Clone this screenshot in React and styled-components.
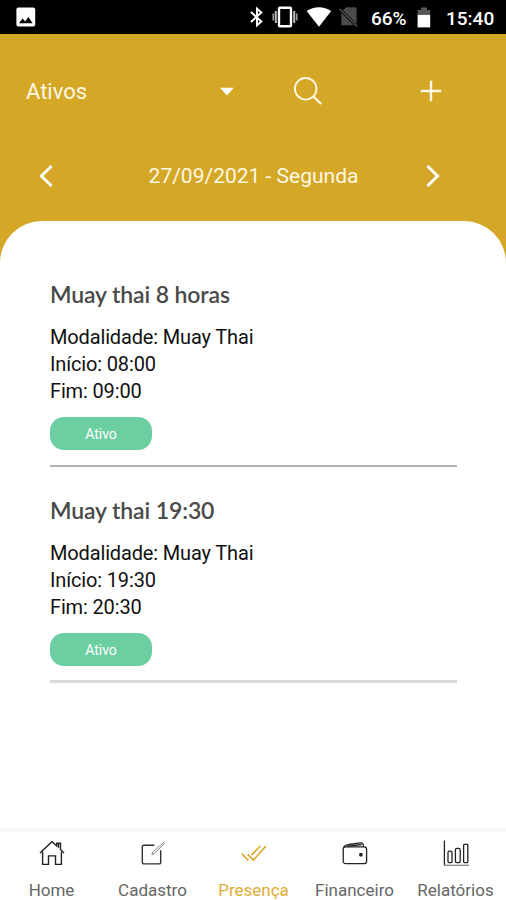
import React, { useState } from 'react';
import styled, { createGlobalStyle } from 'styled-components';

const classes = [
  { id: 1, name: 'Muay thai 8 horas', modality: 'Muay Thai', start: '08:00', end: '09:00' },
  { id: 2, name: 'Muay thai 19:30', modality: 'Muay Thai', start: '19:30', end: '20:30' },
];

const HomeIcon = () => (
  <svg width='26' height='26' viewBox='0 0 26 26' fill='none' stroke='#222' strokeWidth='1.4'>
    <path d='M1 12.9 13 1.8l4.7 4.2V3.3h3.8v6.2l3.5 3.4' />
    <path d='M3.6 11.4v13h5.9v-8.5h7v8.5h5.9v-13' />
    <path d='M19.5 3.3v4.5' />
  </svg>
);

const EditIcon = () => (
  <svg width='26' height='26' viewBox='0 0 26 26' fill='none' stroke='#333' strokeWidth='1.4'>
    <path d='M14.3 5.2H3.8a1.5 1.5 0 0 0-1.5 1.5v15.7a1.5 1.5 0 0 0 1.5 1.5h15.4a1.5 1.5 0 0 0 1.5-1.5V10.2' />
    <path d='m11.8 14.6 1-2.6L23.7 2.4l1 1L14 13.8z' stroke='#777' strokeWidth='.9' />
  </svg>
);

const ChecksIcon = () => (
  <svg width='26' height='26' viewBox='0 0 26 26' fill='none' stroke='#d9a62a' strokeWidth='1.6'>
    <path d='m.8 13.8 6.6 6.6M6.6 14.4l5.8 5.6L25 6' />
    <path d='m10.6 15.2 8.6-9.2' />
  </svg>
);

const WalletIcon = () => (
  <svg width='26' height='26' viewBox='0 0 26 26' fill='none' stroke='#222' strokeWidth='1.3'>
    <rect x='1.2' y='6.8' width='23.4' height='16.8' rx='2.4' />
    <path d='M1.5 7.6C2.2 5 4.8 4.8 7 4.5l11-1.6c2-.3 3 .3 3.2 1.5v2.4M5 6.4l14.6-1.9' />
    <rect x='17.2' y='13' width='3.4' height='3.4' rx='.8' fill='#222' stroke='none' />
  </svg>
);

const ChartIcon = () => (
  <svg width='26' height='28' viewBox='0 0 26 28' fill='none' stroke='#222' strokeWidth='1.3'>
    <path d='M1.4 1.5v25' />
    <path d='M1 26.3h25' stroke='#888' />
    <rect x='5' y='12.2' width='4' height='11.4' rx='1.2' />
    <rect x='12.4' y='9.4' width='4.8' height='14.2' rx='1.6' />
    <rect x='20.6' y='5.4' width='4.2' height='18.2' rx='.8' />
  </svg>
);

const tabs = [
  { label: 'Home', Icon: HomeIcon },
  { label: 'Cadastro', Icon: EditIcon },
  { label: 'Presença', Icon: ChecksIcon },
  { label: 'Financeiro', Icon: WalletIcon },
  { label: 'Relatórios', Icon: ChartIcon },
];

const StatusBar = () => (
  <StStatusBar>
    <svg width='20' height='20' viewBox='0 0 20 20'>
      <rect x='.4' y='.6' width='18.8' height='18.8' rx='2' fill='#fff' />
      <path d='m3 16.2 3.6-4.6 2.5 2.8 3.3-4.5 4.2 6.3z' fill='#000' />
    </svg>
    <StatusIcons>
      <Signals>
        <svg width='16' height='22' viewBox='0 0 16 22' fill='none' stroke='#fff' strokeWidth='2'>
          <path d='m2 6 10.3 9.6L8 19.4V2.6l4.3 3.8L2 16' />
        </svg>
        <svg width='26' height='22' viewBox='0 0 26 22' fill='none' stroke='#fff'>
          <rect x='7' y='1.7' width='12' height='18.6' rx='1' strokeWidth='2.4' />
          <path d='M3.8 5v12M22.2 5v12' strokeWidth='2' stroke='#bbb' />
          <path d='M1.3 7.5v7M24.7 7.5v7' strokeWidth='1.7' stroke='#999' />
        </svg>
        <svg width='26' height='22' viewBox='0 0 26 22'>
          <path d='M.6 5.1C7.7-.2 18-.2 25.2 5.1L13 20.8z' fill='#fff' />
        </svg>
        <svg width='20' height='22' viewBox='0 0 20 22'>
          <path d='M7 1.3h9.2c.8 0 1.4.5 1.4 1.3v16.6H2.3V6z' fill='#4b4b4b' />
          <path d='M1 3.2 18.5 21' stroke='#000' strokeWidth='3' />
          <path d='M.6 2.8 18.2 20.6' stroke='#555' strokeWidth='1.4' />
        </svg>
      </Signals>
      <Percent>66%</Percent>
      <svg width='14' height='22' viewBox='0 0 14 22'>
        <path d='M4 1.6h6v2.5h3.2v5H.6v-5H4z' fill='#555' />
        <path d='M.6 8.9h12.6v12.5H.6z' fill='#fff' />
      </svg>
      <Clock>15:40</Clock>
    </StatusIcons>
  </StStatusBar>
);

const ClassItem = ({ item, light }) => (
  <StClassItem $light={light}>
    <h2>{item.name}</h2>
    <p>Modalidade: {item.modality}</p>
    <p>Início: {item.start}</p>
    <p>Fim: {item.end}</p>
    <Badge>Ativo</Badge>
  </StClassItem>
);

const App = () => {
  const [activeTab, setActiveTab] = useState('Presença');

  return (
    <>
      <GlobalStyle />
      <Screen>
        <StatusBar />
        <Header>
          <FilterRow>
            <Filter type='button'>
              <span>Ativos</span>
              <svg width='14' height='9' viewBox='0 0 14 9'>
                <path d='M.2.8h13.6L7 8.4z' fill='#fff' />
              </svg>
            </Filter>
            <IconButton type='button' aria-label='Buscar' $width={30} $left={59}>
              <svg width='30' height='30' viewBox='0 0 30 30' fill='none' stroke='#fff8e4' strokeWidth='1.9'>
                <circle cx='12.7' cy='12.8' r='10.8' />
                <path d='m20.2 20.4 8 7.6' strokeWidth='2.2' />
              </svg>
            </IconButton>
            <IconButton type='button' aria-label='Adicionar' $width={24} $left={96}>
              <svg width='24' height='24' viewBox='0 0 24 24' stroke='#fff8e4' strokeWidth='2.4'>
                <path d='M12 1.8v20.4M1.8 12h20.4' />
              </svg>
            </IconButton>
          </FilterRow>
          <DateRow>
            <IconButton type='button' aria-label='Dia anterior' $width={16}>
              <svg width='16' height='24' viewBox='0 0 16 24' fill='none' stroke='#fff' strokeWidth='3'>
                <path d='M13.6 2 3.4 12l10.2 10' />
              </svg>
            </IconButton>
            <DateLabel>27/09/2021 - Segunda</DateLabel>
            <IconButton type='button' aria-label='Próximo dia' $width={16}>
              <svg width='16' height='24' viewBox='0 0 16 24' fill='none' stroke='#fff' strokeWidth='3'>
                <path d='m2.4 2 10.2 10L2.4 22' />
              </svg>
            </IconButton>
          </DateRow>
        </Header>
        <Sheet>
          {classes.map((item, index) => (
            <ClassItem key={item.id} item={item} light={index === classes.length - 1} />
          ))}
        </Sheet>
        <TabBar>
          {tabs.map(({ label, Icon }) => (
            <Tab
              key={label}
              type='button'
              $active={label === activeTab}
              onClick={() => setActiveTab(label)}
            >
              <TabIcon>
                <Icon />
              </TabIcon>
              <span>{label}</span>
            </Tab>
          ))}
        </TabBar>
      </Screen>
    </>
  );
};

export default App;

const GlobalStyle = createGlobalStyle`
  * {
    box-sizing: border-box;
  }
  body {
    margin: 0;
    font-family: Roboto, 'Liberation Sans', sans-serif;
  }
  button {
    padding: 0;
    border: none;
    background: none;
    font-family: inherit;
  }
  svg {
    display: block;
    flex-shrink: 0;
  }
`;

const Screen = styled.div`
  display: flex;
  flex-direction: column;
  width: 506px;
  height: 900px;
  overflow: hidden;
  background-color: #d4a726;
`;

const StStatusBar = styled.div`
  display: flex;
  justify-content: space-between;
  align-items: center;
  height: 34px;
  padding: 0 11px 0 16px;
  background-color: #000;
  color: #fff;
  font-size: 19px;
  font-weight: 500;
`;

const StatusIcons = styled.div`
  display: flex;
  align-items: center;
`;

const Signals = styled.div`
  display: flex;
  gap: 7.5px;
`;

const Percent = styled.span`
  width: 37px;
  margin: 2px 9px 0 12px;
`;

const Clock = styled.span`
  width: 49px;
  margin: 2px 0 0 15px;
`;

const Header = styled.header`
  height: 187px;
  padding: 32px 65px 0 26px;
  color: #fff8e4;
`;

const FilterRow = styled.div`
  display: flex;
  align-items: center;
  height: 50px;
`;

const Filter = styled.button`
  display: flex;
  justify-content: space-between;
  align-items: center;
  width: 208px;
  flex-shrink: 0;
  color: inherit;
  font-size: 22px;
`;

const DateRow = styled.div`
  display: flex;
  align-items: center;
  height: 50px;
  margin-top: 35px;
  padding-left: 12px;
`;

const DateLabel = styled.span`
  flex: 1;
  padding-left: 28px;
  font-size: 21px;
  text-align: center;
`;

const IconButton = styled.button`
  flex-shrink: 0;
  width: ${({ $width }) => $width}px;
  margin-left: ${({ $left }) => $left || 0}px;
`;

const Sheet = styled.main`
  flex: 1;
  padding: 56px 49px 0 50px;
  border-radius: 42px 42px 0 0;
  background-color: #fff;
`;

const StClassItem = styled.section`
  height: 190px;
  margin-bottom: 26px;
  border-bottom: ${({ $light }) => ($light ? '3px solid #dadada' : '2px solid #b4b4b4')};
  & h2 {
    margin: 0 0 12px;
    color: #4a4a4a;
    font-family: Lato, sans-serif;
    font-size: 23px;
    font-weight: 600;
    letter-spacing: -0.12px;
    line-height: 35px;
  }
  & p {
    margin: 0;
    color: #111;
    font-size: 20px;
    letter-spacing: -0.15px;
    line-height: 27px;
  }
`;

const Badge = styled.div`
  width: 102px;
  height: 33px;
  margin-top: 12px;
  border-radius: 14px;
  background-color: #6bcfa1;
  color: #fff;
  font-size: 14px;
  line-height: 35px;
  text-align: center;
`;

const TabBar = styled.nav`
  display: flex;
  height: 72px;
  padding-left: 1px;
  border-top: 4px solid #f6f6f6;
  background-color: #fff;
`;

const Tab = styled.button`
  display: flex;
  flex: 1;
  flex-direction: column;
  align-items: center;
  color: ${({ $active }) => ($active ? '#dfac35' : '#666')};
  font-size: 17px;
  line-height: 20px;
`;

const TabIcon = styled.div`
  display: flex;
  justify-content: center;
  align-items: center;
  height: 30px;
  margin: 6px 0 12px;
`;
